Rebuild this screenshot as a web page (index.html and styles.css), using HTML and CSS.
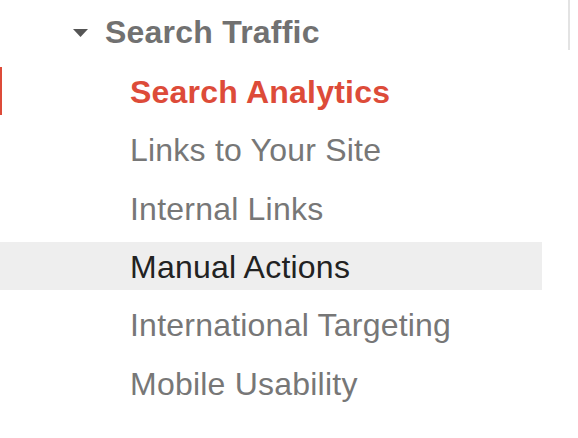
FILE: index.html
```html
<!DOCTYPE html>
<html>
<head>
<meta charset="utf-8">
<link rel="stylesheet" href="styles.css">
</head>
<body>
<div class="page">
  <nav class="nav">
    <div class="section-head">
      <svg class="caret" width="15" height="8" viewBox="0 0 15 8"><path d="M0 0 L15 0 L7.5 8 Z" fill="#555"/></svg>
      <span class="section-title">Search Traffic</span>
    </div>
    <ul class="items">
      <li class="item active">Search Analytics</li>
      <li class="item">Links to Your Site</li>
      <li class="item">Internal Links</li>
      <li class="item hover">Manual Actions</li>
      <li class="item">International Targeting</li>
      <li class="item">Mobile Usability</li>
    </ul>
  </nav>
  <div class="divider"></div>
</div>
</body>
</html>
```
FILE: styles.css
```css
html, body {
  margin: 0;
  padding: 0;
  background: #fff;
}
body {
  font-family: "Liberation Sans", Arial, sans-serif;
  font-size: 32px;
  letter-spacing: 0.22px;
}
.page {
  display: flex;
  align-items: flex-start;
  width: 578px;
  height: 438px;
  overflow: hidden;
}
.nav {
  width: 542px;
  margin-right: 26px;
}
.section-head {
  display: flex;
  align-items: center;
  height: 48px;
  margin-top: 8px;
  padding-left: 73px;
}
.caret {
  display: block;
  margin-right: 17px;
  margin-top: 1px;
}
.section-title {
  font-weight: bold;
  color: #717171;
  line-height: 48px;
}
.items {
  list-style: none;
  margin: 11px 0 0 0;
  padding: 0;
  display: flex;
  flex-direction: column;
  gap: 10.33px;
}
.item {
  height: 48px;
  line-height: 50px;
  padding-left: 130px;
  color: #777;
  white-space: nowrap;
}
.item.active {
  color: #dd4b39;
  font-weight: bold;
  border-left: 2px solid #dd4b39;
  padding-left: 128px;
}
.item.hover {
  background: #eeeeee;
  color: #222;
}
.divider {
  width: 2px;
  height: 50px;
  background: #e3e3e3;
}
```
